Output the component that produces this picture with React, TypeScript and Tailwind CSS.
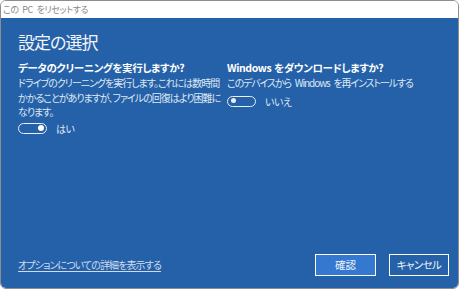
import React from "react";

const Toggle = ({ on }: { on: boolean }) => (
  <div className="relative w-[29px] h-[11px] rounded-full border-[1.5px] border-[#e9eef7] box-border">
    {on ? (
      <div className="absolute right-[2px] top-[1px] w-[6px] h-[6px] rounded-full bg-white" />
    ) : (
      <div className="absolute left-[2.5px] top-[1.5px] w-[5px] h-[5px] rounded-full bg-[#e9eef7]" />
    )}
  </div>
);

export default function App() {
  const jp = "font-['Noto_Sans_CJK_JP','Noto_Sans',sans-serif] [font-feature-settings:'palt']";
  return (
    <div className={`w-[460px] h-[290px] bg-white ${jp}`}>
      <div className="w-[459px] h-[289px] border border-[#8d8d8d] rounded-[6px] overflow-hidden flex flex-col">
        <div className="h-[17px] bg-white flex items-center pl-[2px] text-[9px] text-[#8a8a8a] tracking-[-0.4px] [word-spacing:2px]">
          この PC をリセットする
        </div>
        <div className="flex-1 bg-[#2461a8] flex flex-col pl-[17px] pr-[9px] pb-[12px] text-[#f2f5fa]">
          <div className="pt-[12px] text-[17px] leading-[24px] tracking-[-1px]">設定の選択</div>
          <div className="flex gap-[9px] mt-[6px]">
            <div className="w-[200px] flex flex-col">
              <div className="text-[10.5px] leading-[16px] font-semibold tracking-[-0.4px] text-white whitespace-nowrap [word-spacing:1px]">
                データのクリーニングを実行しますか?
              </div>
              <div className="text-[10px] leading-[14.5px] tracking-[-1px] text-[#dfe7f3]">
                <div className="whitespace-nowrap">ドライブのクリーニングを実行します。これには数時間</div>
                <div className="whitespace-nowrap">かかることがありますが、ファイルの回復はより困難に</div>
                <div className="whitespace-nowrap">なります。</div>
              </div>
              <div className="flex items-center gap-[9px] mt-[1px]">
                <Toggle on={true} />
                <span className="text-[10px] leading-[15px] text-[#dfe7f3] tracking-[-0.5px]">はい</span>
              </div>
            </div>
            <div className="flex flex-col">
              <div className="text-[10.5px] leading-[16px] font-semibold tracking-[-0.4px] text-white whitespace-nowrap [word-spacing:1px]">
                Windows をダウンロードしますか?
              </div>
              <div className="text-[10px] leading-[14.5px] tracking-[-1.1px] text-[#dfe7f3] whitespace-nowrap [word-spacing:2.5px]">
                このデバイスから Windows を再インストールする
              </div>
              <div className="flex items-center gap-[9px] mt-[3px]">
                <Toggle on={false} />
                <span className="text-[10px] leading-[15px] text-[#dfe7f3] tracking-[-0.5px]">いいえ</span>
              </div>
            </div>
          </div>
          <div className="flex-1" />
          <div className="flex items-end justify-between">
            <a className="text-[10px] leading-[15px] tracking-[-0.9px] text-[#cfdcef] underline underline-offset-2 mb-[4px]">
              オプションについての詳細を表示する
            </a>
            <div className="flex gap-[13px]">
              <button className="w-[61px] h-[22px] border-[1.5px] border-white bg-[#3479cf] text-[10.5px] text-[#eef3fa] flex items-center justify-center">
                確認
              </button>
              <button className="w-[60px] h-[22px] border-[1.5px] border-white bg-[#2461a8] text-[10.5px] text-[#eef3fa] tracking-[-0.6px] flex items-center justify-center">
                キャンセル
              </button>
            </div>
          </div>
        </div>
      </div>
    </div>
  );
}
